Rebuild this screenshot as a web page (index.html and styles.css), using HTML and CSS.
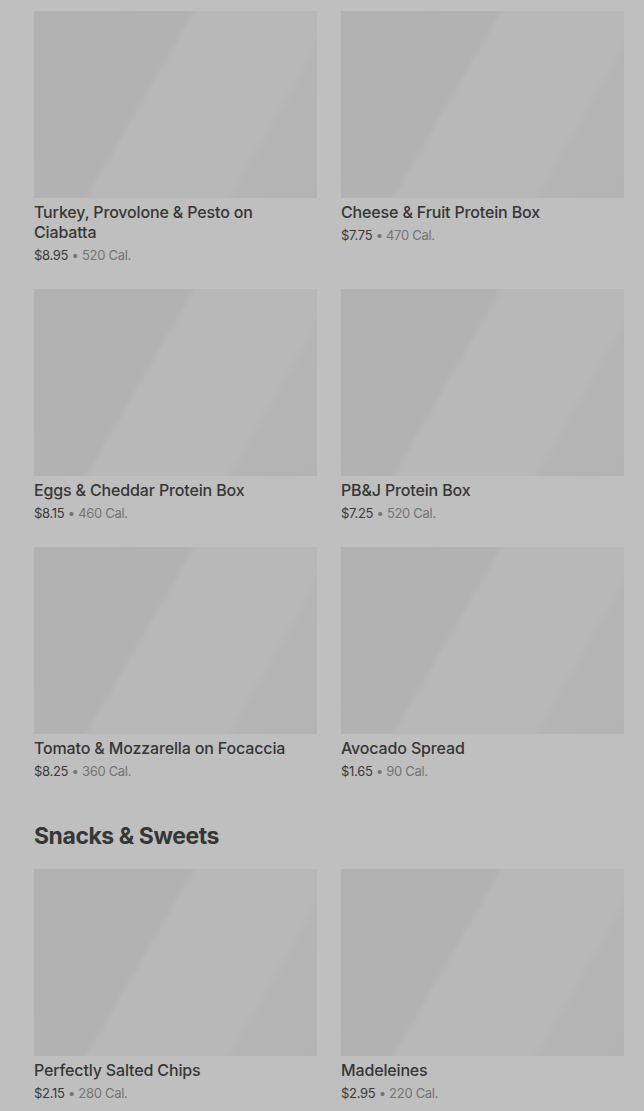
FILE: index.html
```html
<!DOCTYPE html>
<html lang="en">
<head>
<meta charset="utf-8">
<title>Menu</title>
<link rel="stylesheet" href="styles.css">
</head>
<body>
<main class="page">
  <section class="grid">
    <article class="item">
      <div class="thumb"></div>
      <h3 class="name">Turkey, Provolone &amp; Pesto on Ciabatta</h3>
      <p class="meta"><span class="price">$8.95</span> <span class="cal">• 520 Cal.</span></p>
    </article>
    <article class="item">
      <div class="thumb"></div>
      <h3 class="name">Cheese &amp; Fruit Protein Box</h3>
      <p class="meta"><span class="price">$7.75</span> <span class="cal">• 470 Cal.</span></p>
    </article>
    <article class="item">
      <div class="thumb"></div>
      <h3 class="name">Eggs &amp; Cheddar Protein Box</h3>
      <p class="meta"><span class="price">$8.15</span> <span class="cal">• 460 Cal.</span></p>
    </article>
    <article class="item">
      <div class="thumb"></div>
      <h3 class="name">PB&amp;J Protein Box</h3>
      <p class="meta"><span class="price">$7.25</span> <span class="cal">• 520 Cal.</span></p>
    </article>
    <article class="item">
      <div class="thumb"></div>
      <h3 class="name">Tomato &amp; Mozzarella on Focaccia</h3>
      <p class="meta"><span class="price">$8.25</span> <span class="cal">• 360 Cal.</span></p>
    </article>
    <article class="item">
      <div class="thumb"></div>
      <h3 class="name">Avocado Spread</h3>
      <p class="meta"><span class="price">$1.65</span> <span class="cal">• 90 Cal.</span></p>
    </article>
  </section>

  <h2 class="section-title">Snacks &amp; Sweets</h2>

  <section class="grid">
    <article class="item">
      <div class="thumb"></div>
      <h3 class="name">Perfectly Salted Chips</h3>
      <p class="meta"><span class="price">$2.15</span> <span class="cal">• 280 Cal.</span></p>
    </article>
    <article class="item">
      <div class="thumb"></div>
      <h3 class="name">Madeleines</h3>
      <p class="meta"><span class="price">$2.95</span> <span class="cal">• 220 Cal.</span></p>
    </article>
  </section>
</main>
</body>
</html>
```

FILE: styles.css
```css
html, body {
  margin: 0;
  padding: 0;
  background: #bfbfbf;
}

body {
  font-family: Inter, "Liberation Sans", Arial, sans-serif;
  color: #333333;
  overflow: hidden;
}

.page {
  padding: 11px 20px 0 34px;
}

.grid {
  display: grid;
  grid-template-columns: 283px 283px;
  column-gap: 24px;
  row-gap: 25px;
}

.item {
  display: flex;
  flex-direction: column;
  margin: 0;
}

.thumb {
  height: 187px;
  background: linear-gradient(120deg,
    #b1b1b1 0%,
    #b2b2b2 40%,
    #b8b8b8 42%,
    #b8b8b8 76%,
    #b4b4b4 79%,
    #b3b3b3 100%);
}

.name {
  margin: 4px 0 0;
  font-size: 16px;
  line-height: 20px;
  font-weight: 500;
  color: #363636;
  letter-spacing: -0.15px;
}

.meta {
  margin: 4px 0 0;
  font-size: 13px;
  line-height: 18px;
  font-weight: 400;
  letter-spacing: -0.3px;
}

.price {
  color: #3a3a3a;
}

.cal {
  color: #747474;
}

.section-title {
  margin: 40px 0 17px;
  font-size: 23px;
  line-height: 32px;
  font-weight: 700;
  color: #363636;
  letter-spacing: -0.45px;
}
```
